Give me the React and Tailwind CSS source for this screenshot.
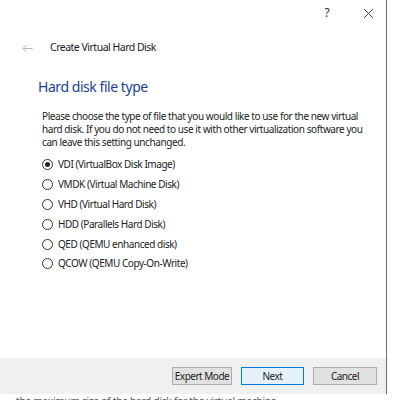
import React, { useState } from 'react';

const options = [
    'VDI (VirtualBox Disk Image)',
    'VMDK (Virtual Machine Disk)',
    'VHD (Virtual Hard Disk)',
    'HDD (Parallels Hard Disk)',
    'QED (QEMU enhanced disk)',
    'QCOW (QEMU Copy-On-Write)',
];

const Radio = ({ checked }) => (
    <span className="w-[11px] h-[11px] rounded-full border border-[#333] bg-white flex items-center justify-center shrink-0">
        {checked && <span className="w-[5px] h-[5px] rounded-full bg-[#222]"></span>}
    </span>
);

const App = () => {
    const [selected, setSelected] = useState(0);

    return (
        <div className="w-[398px] h-[400px] bg-white overflow-hidden flex flex-col text-[#1a1a1a]" style={{ fontFamily: '"Noto Sans", "Open Sans", sans-serif' }}>
            <div className="w-[387px] h-[394px] border-r border-[#6b6b6b] flex flex-col shrink-0">
                {/* Title bar */}
                <div className="h-[26px] flex items-center justify-end text-[#333]">
                    <span className="text-[12px] w-[14px] mr-[29px] text-center">?</span>
                    <svg width="11" height="11" viewBox="0 0 11 11" className="mr-[12px]">
                        <path d="M1 1 L10 10 M10 1 L1 10" stroke="#444" strokeWidth="1" />
                    </svg>
                </div>

                {/* Header */}
                <div className="h-[44px] flex items-center pl-[22px]">
                    <svg width="11" height="9" viewBox="0 0 11 9" className="mr-[17px]">
                        <path d="M10.5 4.5 H1 M4.5 1 L1 4.5 L4.5 8" stroke="#b5b5b5" strokeWidth="1" fill="none" />
                    </svg>
                    <span className="text-[10.5px] tracking-[-0.5px]">Create Virtual Hard Disk</span>
                </div>

                {/* Content */}
                <div className="flex-1 pl-[38px] pr-[10px]">
                    <h1 className="text-[14px] tracking-[-0.45px] text-[#1c3f94] leading-[22px] mt-[6px]">Hard disk file type</h1>
                    <p className="text-[10px] tracking-[-0.42px] leading-[13px] text-[#222] mt-[12px] pl-[4px] whitespace-nowrap">
                        Please choose the type of file that you would like to use for the new virtual<br />
                        hard disk. If you do not need to use it with other virtualization software you<br />
                        can leave this setting unchanged.
                    </p>
                    <div className="mt-[6px] pl-[4px] flex flex-col">
                        {options.map((opt, i) => (
                            <label key={opt} onClick={() => setSelected(i)} className="h-[19.8px] flex items-center gap-[5px] text-[10px] tracking-[-0.45px] text-[#222] cursor-pointer">
                                <Radio checked={selected === i} />
                                <span>{opt}</span>
                            </label>
                        ))}
                    </div>
                </div>

                {/* Footer */}
                <div className="h-[36px] bg-[#f0f0f0] flex items-center justify-end gap-[9px] pr-[9px]">
                    <button className="w-[60px] h-[18px] border border-[#adadad] bg-[#e1e1e1] text-[10px] tracking-[-0.5px] whitespace-nowrap text-[#222]">Expert Mode</button>
                    <button className="w-[63px] h-[18px] border border-[#0078d7] bg-[#e5f1fb] text-[10px] tracking-[-0.5px] text-[#222]">Next</button>
                    <button className="w-[64px] h-[18px] border border-[#adadad] bg-[#e1e1e1] text-[10px] tracking-[-0.5px] text-[#222]">Cancel</button>
                </div>
            </div>
            <div className="pl-[16px] text-[10px] tracking-[-0.2px] leading-[13px] text-[#555] mt-[1px] whitespace-nowrap">
                the maximum size of the hard disk for the virtual machine
            </div>
        </div>
    );
};

export default App;
